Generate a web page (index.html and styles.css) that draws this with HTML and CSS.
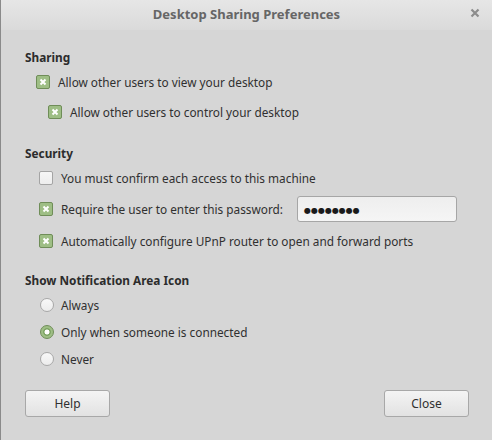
FILE: index.html
```html
<!DOCTYPE html>
<html>
<head>
<meta charset="utf-8">
<link rel="stylesheet" href="styles.css">
</head>
<body>
<div class="window">
  <div class="titlebar">
    <span class="title">Desktop Sharing Preferences</span>
    <svg class="close" width="10" height="10" viewBox="0 0 10 10"><path d="M1.5 1.5 L8.5 8.5 M8.5 1.5 L1.5 8.5" stroke="#8c8c8c" stroke-width="2.2" stroke-linecap="butt"/></svg>
  </div>
  <div class="content">
    <div class="section s-share">
      <div class="heading">Sharing</div>
      <div class="row ind-a"><span class="check on"></span><span>Allow other users to view your desktop</span></div>
      <div class="row ind-b"><span class="check on"></span><span>Allow other users to control your desktop</span></div>
    </div>
    <div class="section s-sec">
      <div class="heading">Security</div>
      <div class="row ind-c"><span class="check"></span><span>You must confirm each access to this machine</span></div>
      <div class="row ind-c r-pass"><span class="check on"></span><span class="pass-label">Require the user to enter this password:</span><span class="entry">●●●●●●●●</span></div>
      <div class="row ind-c"><span class="check on"></span><span>Automatically configure UPnP router to open and forward ports</span></div>
    </div>
    <div class="section s-notif">
      <div class="heading">Show Notification Area Icon</div>
      <div class="row ind-d r-rad"><span class="radio"></span><span>Always</span></div>
      <div class="row ind-d r-rad"><span class="radio on"></span><span>Only when someone is connected</span></div>
      <div class="row ind-d r-rad"><span class="radio"></span><span>Never</span></div>
    </div>
    <div class="buttons">
      <button class="btn">Help</button>
      <button class="btn">Close</button>
    </div>
  </div>
</div>
</body>
</html>
```
FILE: styles.css
```css
* { box-sizing: border-box; }
html, body { margin: 0; padding: 0; }
body {
  width: 492px; height: 440px; overflow: hidden;
  font-family: "Noto Sans", "DejaVu Sans", sans-serif;
  font-size: 11.8px; color: #303030;
  background: #d6d6d6;
}
.window {
  width: 492px; height: 440px;
  background: #d6d6d6;
  border-left: 1px solid #8a8a8a;
  display: flex; flex-direction: column;
}
.titlebar {
  height: 30px; flex: none;
  background: linear-gradient(#e6e6e6, #dadada);
  position: relative;
  display: flex; align-items: center; justify-content: center;
  padding-bottom: 2px;
}
.title { font-weight: bold; color: #666666; font-size: 13px; }
.close { position: absolute; right: 12px; top: 8px; }
.content { padding: 18px 23px 0 24px; display: flex; flex-direction: column; flex: 1; }
.section { display: flex; flex-direction: column; }
.s-share { margin-bottom: 11px; }
.s-sec { margin-bottom: 9px; }
.heading { font-weight: bold; color: #2c2c2c; height: 18px; line-height: 18px; margin-bottom: 7px; }
.row { display: flex; align-items: center; height: 18px; margin-bottom: 12px; white-space: nowrap; }
.ind-a { padding-left: 11px; }
.ind-b { padding-left: 23px; }
.ind-c { padding-left: 14px; }
.ind-d { padding-left: 15px; }
.r-pass { height: 26px; margin-top: -3px; margin-bottom: 10px; }
.r-rad { margin-bottom: 9px; }
.check {
  width: 14px; height: 14px; flex: none;
  border: 1px solid #a4a4a4; border-radius: 2px;
  background: linear-gradient(#f6f6f6, #ededed);
  margin-right: 8px;
}
.check.on {
  border-color: #6f8d58;
  background-color: #9ebe85;
  background-image: url("data:image/svg+xml,%3Csvg xmlns='http://www.w3.org/2000/svg' width='12' height='12'%3E%3Cpath d='M3.5 3.5 L8.5 8.5 M8.5 3.5 L3.5 8.5' stroke='white' stroke-width='2'/%3E%3C/svg%3E");
  background-repeat: no-repeat; background-position: center;
}
.radio {
  width: 14px; height: 14px; flex: none; border-radius: 50%;
  border: 1px solid #a8a8a8;
  background: linear-gradient(#f8f8f8, #ececec);
  margin-right: 7px;
}
.radio.on {
  border: 1px solid #6f8d58;
  background: radial-gradient(circle, #ffffff 0 2.2px, #7fa566 2.8px 3.6px, #9ebe85 4.2px);
}
.entry {
  margin-left: 14px;
  width: 160px; height: 26px; flex: none;
  border: 1px solid #a6a6a6; border-radius: 3px;
  background: linear-gradient(#eeeeee, #f5f5f5);
  font-size: 8px; color: #1a1a1a;
  display: flex; align-items: center; padding-left: 6px;
}
.buttons { display: flex; justify-content: space-between; margin-top: 13px; }
.btn {
  width: 85px; height: 27px;
  border: 1px solid #a8a8a8; border-radius: 3px;
  background: linear-gradient(#f4f4f4, #e2e2e2);
  font-family: inherit; font-size: 12px; color: #303030;
}
```
